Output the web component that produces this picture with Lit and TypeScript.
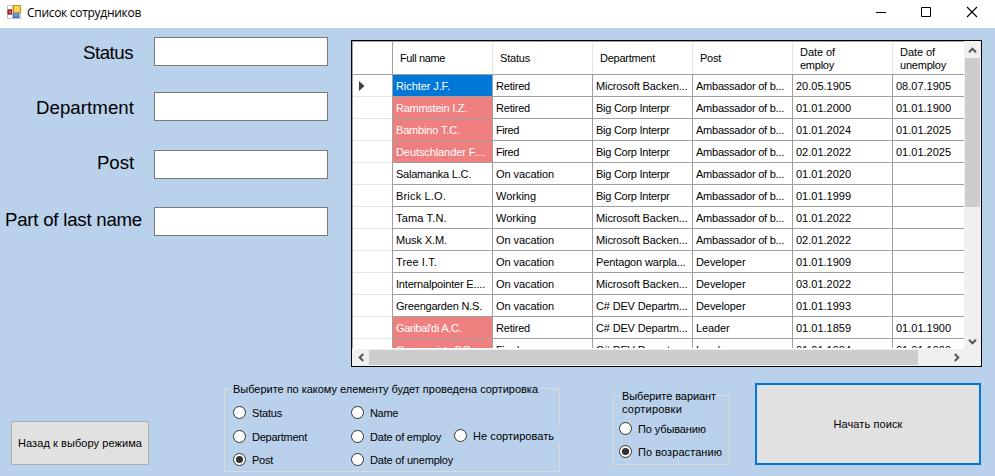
import { LitElement, html, css, svg } from "lit";
import { customElement } from "lit/decorators.js";

const UI = '"Liberation Sans", Arial, sans-serif';
const TITLE = '"Open Sans", "Noto Sans", sans-serif';
const ctx = document.createElement("canvas").getContext("2d")!;

// Tracking that makes a string occupy the given advance width.
const track = (text: string, width: number, size = 11, family = UI) => {
  ctx.font = `${size}px ${family}`;
  return `letter-spacing:${((width - ctx.measureText(text).width) / text.length).toFixed(3)}px`;
};
const t = (text: string, width?: number, size = 11, family = UI) =>
  html`<span class="t" style=${width ? track(text, width, size, family) : ""}>${text}</span>`;

const WIDTHS: Record<string, number> = {
  "Richter J.F.": 54, "Rammstein I.Z.": 71, "Bambino T.C.": 64, "Deutschlander F....": 90,
  "Salamanka L.C.": 75, "Brick L.O.": 50, "Tama T.N.": 51, "Musk X.M.": 51, "Tree I.T.": 41,
  "Internalpointer E....": 89, "Greengarden N.S.": 86, "Garibal'di A.C.": 66, "Communiste P.G.": 77,
  "Retired": 34, "Fired": 23, "On vacation": 58, "Working": 40,
  "Microsoft Backen...": 91.5, "Big Corp Interpr": 73.5, "Pentagon warpla...": 89.5, "C# DEV Departm...": 91.5,
  "Ambassador of b...": 88, "Developer": 49.5, "Leader": 33.5,
};
const M = "Microsoft Backen...", B = "Big Corp Interpr", P = "Pentagon warpla...", C = "C# DEV Departm...";
const A = "Ambassador of b...";
const ROWS: string[][] = [
  ["Richter J.F.", "Retired", M, A, "20.05.1905", "08.07.1905"],
  ["Rammstein I.Z.", "Retired", B, A, "01.01.2000", "01.01.1900"],
  ["Bambino T.C.", "Fired", B, A, "01.01.2024", "01.01.2025"],
  ["Deutschlander F....", "Fired", B, A, "02.01.2022", "01.01.2025"],
  ["Salamanka L.C.", "On vacation", B, A, "01.01.2020", ""],
  ["Brick L.O.", "Working", B, A, "01.01.1999", ""],
  ["Tama T.N.", "Working", M, A, "01.01.2022", ""],
  ["Musk X.M.", "On vacation", M, A, "02.01.2022", ""],
  ["Tree I.T.", "On vacation", P, "Developer", "01.01.1909", ""],
  ["Internalpointer E....", "On vacation", M, "Developer", "03.01.2022", ""],
  ["Greengarden N.S.", "On vacation", C, "Developer", "01.01.1993", ""],
  ["Garibal'di A.C.", "Retired", C, "Leader", "01.01.1859", "01.01.1900"],
  ["Communiste P.G.", "Fired", C, "Leader", "01.01.1984", "01.01.1900"],
];
const HEADS: [string, number][][] = [
  [["Full name", 45]], [["Status", 30]], [["Department", 55]], [["Post", 21]],
  [["Date of", 35], ["employ", 34]], [["Date of", 35], ["unemploy", 46]],
];

const chevron = (d: string) => html`<svg class="chev" width="9" height="9" viewBox="0 0 9 9">
  <path d=${d} fill="none" stroke="#555" stroke-width="2"/></svg>`;

@customElement("data-grid")
class DataGrid extends LitElement {
  static styles = css`
    :host { display: grid; box-sizing: border-box; width: 631px; height: 327px; border: 1px solid #000;
      grid-template: 308px 17px / 612px 17px; background: #f0f0f0; overflow: hidden; }
    .t { white-space: pre; }
    .view { overflow: hidden; background: #fff; box-sizing: border-box; border: solid #a0a0a0; border-width: 1px 0 0 1px;
      border-bottom: 1px solid #fff; }
    .row { display: grid; grid-template-columns: 40px repeat(5, 100px) 72px; height: 22px; width: 612px; }
    .head { height: 32px; border-bottom: 1px solid #a0a0a0; }
    .cell, .stub, .hcell { box-sizing: border-box; overflow: hidden; }
    .cell { border: solid #a0a0a0; border-width: 0 1px 1px 0; padding-left: 3px; line-height: 23px; height: 22px; }
    .stub { border: solid #a0a0a0; border-width: 0 1px 0 0; display: flex; align-items: center; padding-left: 6px;
      box-shadow: inset 0 -1px #e5e5e5; }
    .head .stub { box-shadow: none; }
    .hcell { display: flex; flex-direction: column; justify-content: center; padding: 0 0 0 7px; line-height: 13px;
      border-right: 1px solid #e5e5e5; margin-top: 1px; }
    .cell:last-child, .hcell:last-child { border-right: 0; }
    .red { background: #f08080; color: #fff; }
    .sel { background: #0078d7; color: #fff; }
    .vbar { display: flex; flex-direction: column; background: #f0f0f0; padding-top: 1px; margin-left: 1px; width: 15px; }
    .hbar { grid-column: 1 / 3; display: flex; background: #f0f0f0; padding: 1px 0 0 1px; height: 15px; }
    .btn { display: flex; align-items: center; justify-content: center; width: 15px; height: 16px; }
    .hbar .btn { width: 16px; height: 15px; }
    .vthumb { background: #cdcdcd; height: 149px; }
    .hthumb { background: #cdcdcd; width: 549px; }
    .down { margin-top: auto; }
    .right { margin-left: 30px; }
    .chev { display: block; }
  `;
  render() {
    return html`
      <div class="view">
        <div class="row head"><div class="stub"></div>
          ${HEADS.map((h) => html`<div class="hcell">${h.map(([s, w]) => t(s, w))}</div>`)}</div>
        ${ROWS.map((r, i) => html`<div class="row">
          <div class="stub">${i === 0 ? html`<svg width="6" height="10" viewBox="0 0 6 10"><path d="M0 0L5.5 5L0 10Z" fill="#404040"/></svg>` : ""}</div>
          ${r.map((s, c) => html`<div class="cell ${c ? "" : i === 0 ? "sel" : i < 4 || i > 10 ? "red" : ""}">${s ? t(s, c > 3 ? 55 : WIDTHS[s]) : ""}</div>`)}
        </div>`)}
      </div>
      <div class="vbar">
        <div class="btn">${chevron("M1 6.2L4.5 2.7L8 6.2")}</div><div class="vthumb"></div>
        <div class="btn down">${chevron("M1 2.8L4.5 6.3L8 2.8")}</div>
      </div>
      <div class="hbar">
        <div class="btn">${chevron("M6.2 1L2.7 4.5L6.2 8")}</div><div class="hthumb"></div>
        <div class="btn right">${chevron("M2.8 1L6.3 4.5L2.8 8")}</div>
      </div>`;
  }
}

const radio = (label: string, width: number, on = false, extra = "") => html`
  <label class="radio ${extra}"><svg width="13" height="13" viewBox="0 0 13 13">
    <circle cx="6.5" cy="6.5" r="6" fill="#fff" stroke="#333"/>
    ${on ? svg`<circle cx="6.5" cy="6.5" r="3.6" fill="#333"/>` : ""}</svg>${t(label, width)}</label>`;

@customElement("app-root")
class AppRoot extends LitElement {
  static styles = css`
    :host { display: flex; flex-direction: column; width: 995px; height: 476px; overflow: hidden; background: #b9d1ea;
      font: 11px "Liberation Sans", Arial, sans-serif; color: #000; }
    .t { white-space: pre; }
    .title { height: 28px; flex: none; background: #fff; display: flex; align-items: center; padding-left: 7px; box-sizing: border-box;
      font: 12px "Open Sans", "Noto Sans", sans-serif; }
    .title .t { margin: -3px 0 0 6px; }
    .app { margin-top: -4px; }
    .win { margin: -4px 17px 0 auto; display: flex; gap: 33px; }
    .win svg { display: block; }
    .win .close { margin-left: 1px; }
    .main { display: flex; height: 339px; margin-top: 9px; flex: none; }
    .form { width: 351px; flex: none; display: flex; flex-direction: column; }
    .field { display: flex; height: 29px; align-items: center; font-size: 18.67px; }
    .name { width: 154px; display: flex; box-sizing: border-box; justify-content: flex-end; line-height: 22px; }
    .up { padding-bottom: 3px; }
    .low { padding-top: 2px; }
    .input { width: 174px; height: 29px; box-sizing: border-box; border: 1px solid #7a7a7a; background: #fff; }
    data-grid { margin-top: 3px; }
    .bottom { display: flex; align-items: flex-start; flex: 1; }
    .button { box-sizing: border-box; background: #e1e1e1; border: 1px solid #adadad; display: flex; align-items: center; justify-content: center; }
    .back { width: 138px; height: 44px; margin: 45px 75px 0 11px; }
    .go { width: 226px; height: 82px; border: 2px solid #0078d7; margin: 7px 0 0 25px; }
    .group { box-sizing: border-box; border: 1px solid #dcdcdc; margin: 0; }
    .legend { background: #b9d1ea; line-height: 13px; display: flex; flex-direction: column; }
    .sort { width: 336px; height: 84px; margin-top: 12px; padding: 0 0 0 6px; }
    .sort .legend { width: 310px; padding-left: 2px; box-sizing: border-box; margin: -7px 0 0 0; height: 14px; line-height: 15px; }
    .cols { display: flex; margin: 10px 0 0 2px; }
    .col { width: 118px; flex: none; }
    .col.mid { width: 103px; }
    .radio { display: flex; align-items: center; gap: 6px; height: 13px; margin-bottom: 10px; }
    .radio svg { display: block; flex: none; }
    .first { margin-bottom: 11px; }
    .none { background: #b9d1ea; height: 17px; width: 108px; margin-top: 21px; flex: none; }
    .order { width: 117px; height: 70px; margin: 19px 0 0 53px; padding-left: 5px; }
    .order .legend { width: 97px; margin: -6px 0 6px 1px; padding-left: 2px; box-sizing: border-box; }
  `;
  render() {
    const fields: [string, number, number, number, string][] = [
      ["Status", 50, 21, 0, "low"], ["Department", 98, 20, 26, "low"], ["Post", 37, 20, 29, "up"], ["Part of last name", 137, 12, 28, "up"],
    ];
    return html`
      <div class="title">
        <svg class="app" width="14" height="14" viewBox="0 0 14 14">
          <rect width="14" height="14" fill="#c3c5ca"/>
          <rect x="1" y="1" width="4" height="3" fill="#fff"/><rect x="1" y="10" width="4" height="3" fill="#fff"/>
          <rect x="6" y="0" width="8" height="8" fill="#c89018"/><rect x="7" y="1" width="6" height="6" fill="#fcd352"/>
          <rect x="0.5" y="4.5" width="4.5" height="5" fill="#a11b18"/><rect x="2" y="6" width="2" height="2" fill="#e8705c"/>
          <rect x="6" y="8.5" width="6" height="4.5" fill="#3569c6"/><rect x="7" y="9.5" width="4" height="2" fill="#7da8ef"/>
        </svg>${t("Список сотрудников", 114, 12, TITLE)}
        <div class="win">
          <svg width="12" height="12" viewBox="0 0 12 12"><path d="M1 6.5H11" stroke="#000"/></svg>
          <svg width="12" height="12" viewBox="0 0 12 12"><path d="M1.5 1.5H10.5V10.5H1.5Z" fill="none" stroke="#000"/></svg>
          <svg class="close" width="12" height="12" viewBox="0 0 12 12"><path d="M1 1L11 11M11 1L1 11" stroke="#000" stroke-width="1.1"/></svg>
        </div>
      </div>
      <div class="main">
        <div class="form">${fields.map(([s, w, pad, top, shift]) => html`
          <div class="field" style="margin-top:${top}px"><div class="name ${shift}" style="padding-right:${pad}px">${t(s, w, 18.67)}</div><div class="input"></div></div>`)}
        </div>
        <data-grid></data-grid>
      </div>
      <div class="bottom">
        <div class="button back">${t("Назад к выбору режима", 124)}</div>
        <div class="group sort">
          <div class="legend">${t("Выберите по какому елементу будет проведена сортировка", 305)}</div>
          <div class="cols">
            <div class="col">${radio("Status", 30, false, "first")}${radio("Department", 55)}${radio("Post", 21, true)}</div>
            <div class="col mid">${radio("Name", 28, false, "first")}${radio("Date of employ", 71)}${radio("Date of unemploy", 83)}</div>
            ${radio("Не сортировать", 81, false, "none")}
          </div>
        </div>
        <div class="group order">
          <div class="legend">${t("Выберите вариант", 94)}${t("сортировки", 60)}</div>
          ${radio("По убыванию", 68)}${radio("По возрастанию", 84, true)}
        </div>
        <div class="button go">${t("Начать поиск", 69)}</div>
      </div>`;
  }
}
